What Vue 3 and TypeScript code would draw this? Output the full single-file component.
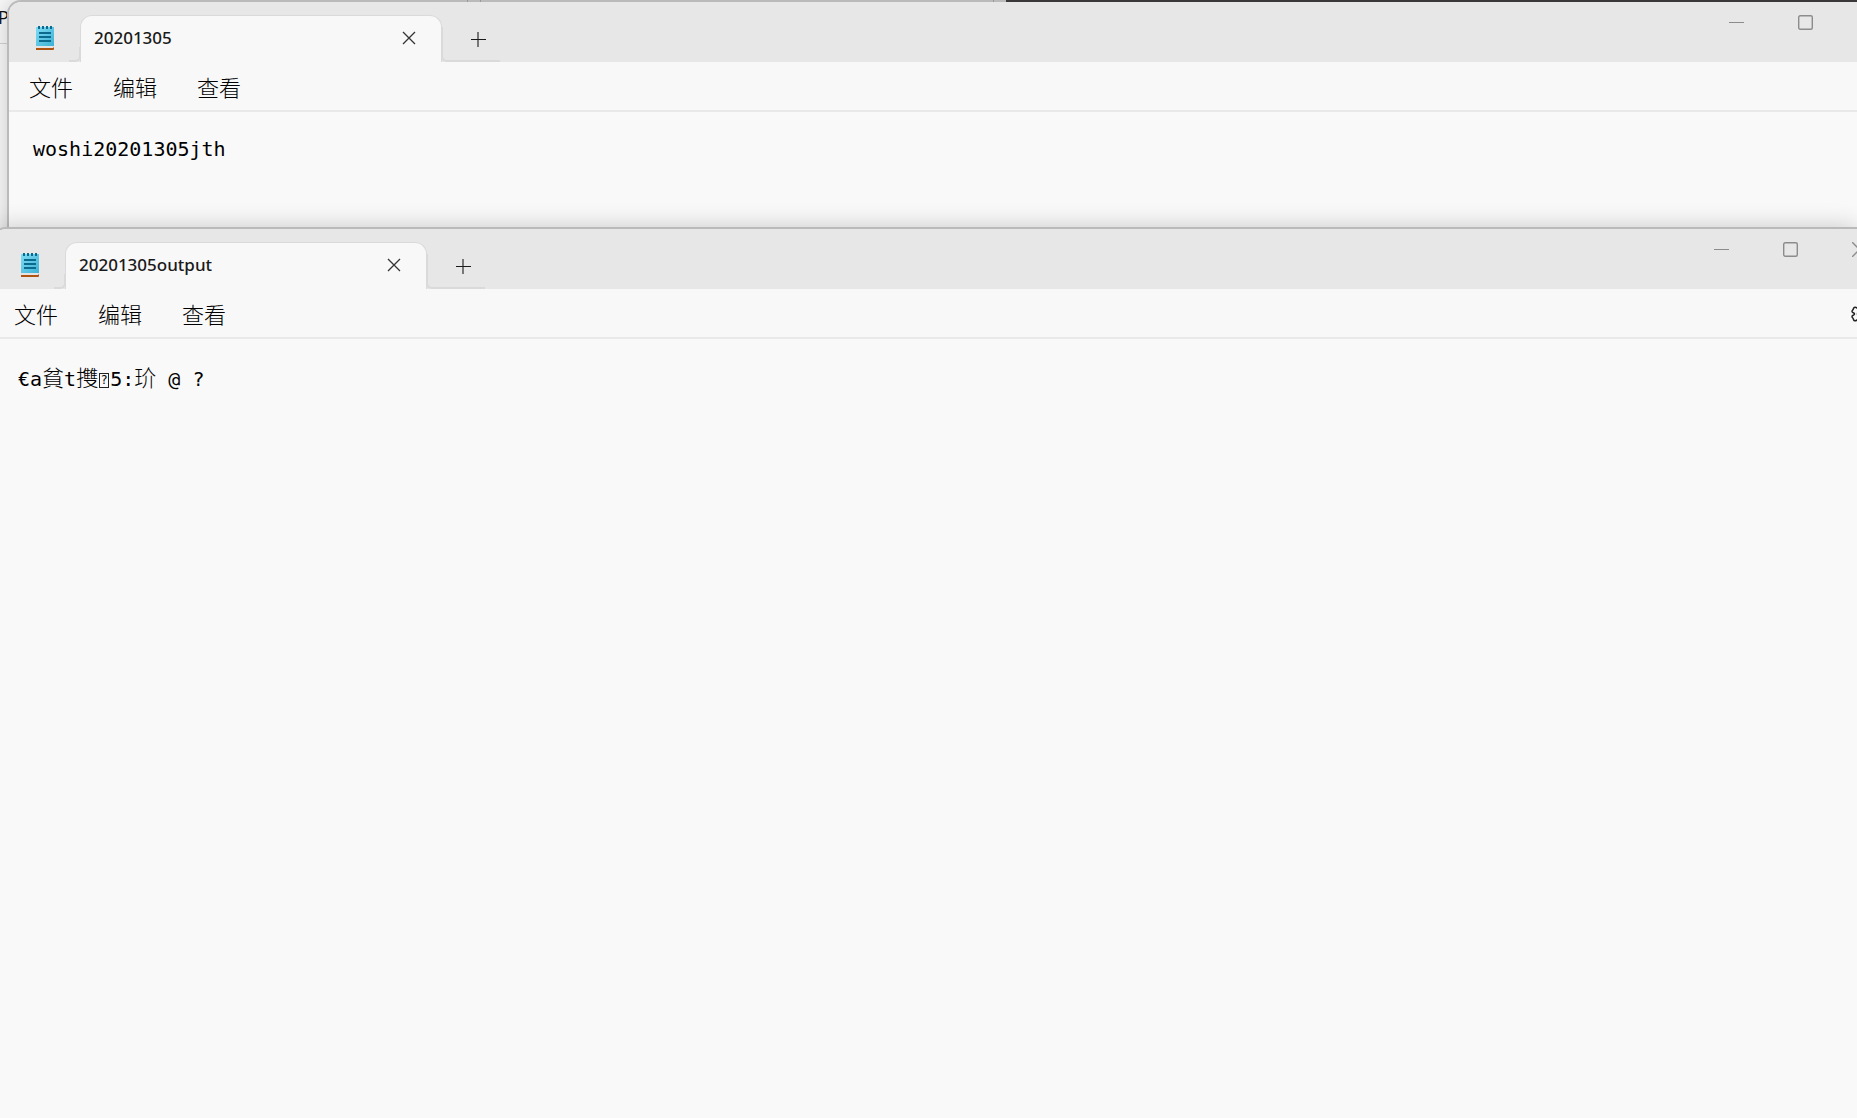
<script setup lang="ts">
import { ref } from 'vue'

interface Run { text: string; kind: 'latin' | 'cjk' | 'missing' }
interface Note { id: string; title: string; runs: Run[] }

const menus = ['文件', '编辑', '查看']
const notes = ref<Note[]>([
  { id: 'back', title: '20201305', runs: [{ text: 'woshi20201305jth', kind: 'latin' }] },
  {
    id: 'front',
    title: '20201305output',
    runs: [
      { text: '€a', kind: 'latin' },
      { text: '貧', kind: 'cjk' },
      { text: 't', kind: 'latin' },
      { text: '㩳', kind: 'cjk' },
      { text: '?', kind: 'missing' },
      { text: '5:', kind: 'latin' },
      { text: '玠', kind: 'cjk' },
      { text: ' @ ?', kind: 'latin' },
    ],
  },
])
</script>

<template>
  <main class="desktop">
    <div class="strip"><i></i><i></i><i></i><b></b></div>
    <div class="behind">P</div>
    <section v-for="note in notes" :key="note.id" class="window" :class="note.id">
      <header class="titlebar">
        <svg class="logo" width="18" height="24" viewBox="0 0 18 24" aria-hidden="true">
          <defs>
            <linearGradient :id="'page-' + note.id" x1="0" y1="0" x2="1" y2="1">
              <stop offset="0" stop-color="#7fdcf4" />
              <stop offset="1" stop-color="#3db1d4" />
            </linearGradient>
          </defs>
          <rect y="19" width="18" height="3" fill="#e4e4e4" />
          <path d="M0 22h17l1-1v2q0 1-1 1H0z" fill="#ae5410" />
          <rect y="1" width="18" height="19" :fill="`url(#page-${note.id})`" />
          <path d="M3 0v3M7 0v3M11 0v3M15 0v3" stroke="#0b6a8e" stroke-width="2" />
          <path d="M3 7h12M3 11h12M3 15h12" stroke="#0b6a8e" stroke-width="2" />
        </svg>
        <div class="foot left"></div>
        <div class="tab">
          <span class="title">{{ note.title }}</span>
          <button class="icon" type="button" aria-label="Close tab">
            <svg width="14" height="14" viewBox="0 0 14 14"><path d="M1 1l12 12M13 1L1 13" stroke="#333" stroke-width="1.3" /></svg>
          </button>
        </div>
        <div class="foot right">
          <button class="icon" type="button" aria-label="New tab">
            <svg width="15" height="15" viewBox="0 0 15 15"><path d="M7 0v15" stroke="#777" stroke-width="2" /><path d="M0 7.5h15" stroke="#1a1a1a" /></svg>
          </button>
        </div>
        <div class="controls">
          <button class="icon" type="button" aria-label="Minimize">
            <svg width="15" height="15" viewBox="0 0 15 15"><path d="M0 7.5h15" stroke="#8c8c8c" /></svg>
          </button>
          <button class="icon" type="button" aria-label="Maximize">
            <svg width="15" height="15" viewBox="0 0 15 15"><rect x=".7" y=".7" width="13.6" height="13.6" rx="1.5" fill="none" stroke="#8c8c8c" stroke-width="1.4" /></svg>
          </button>
          <button class="icon" type="button" aria-label="Close">
            <svg width="15" height="15" viewBox="0 0 15 15"><path d="M0 0l15 15M15 0L0 15" stroke="#8c8c8c" stroke-width="1.4" /></svg>
          </button>
        </div>
      </header>
      <nav class="menubar">
        <button v-for="m in menus" :key="m" class="menu" type="button">{{ m }}</button>
        <button class="icon gear" type="button" aria-label="Settings">
          <svg width="18" height="18" viewBox="0 0 18 18" fill="none" stroke="#222" stroke-width="1.5">
            <path d="M6.5 3.5C5 2 3 1.5 2.5 3.5C2 5.5 1 5 1 6.5C1 8 3.5 7.5 3.5 9S1 10 1 11.5C1 13 2 12.5 2.5 14.5C3 16.500 5 16 6.5 14.5C7.5 14 7.5 17 9 17S10.5 14 11.5 14.5C13 16 15 16.5 15.5 14.5C16 12.5 17 13 17 11.5C17 10 14.5 10.5 14.5 9S17 8 17 6.5C17 5 16 5.5 15.5 3.5C15 1.5 13 2 11.5 3.5C10.5 4 10.5 1 9 1S7.5 4 6.5 3.5z" />
            <circle cx="9" cy="9" r="2.5" />
          </svg>
        </button>
      </nav>
      <div class="page"><span v-for="(r, i) in note.runs" :key="i" :class="r.kind">{{ r.text }}</span></div>
    </section>
  </main>
</template>

<style>
html, body, #app { height: 100%; }
body { margin: 0; background: #f9f9f9; }
</style>

<style scoped>
* { box-sizing: border-box; }
.desktop {
  position: relative;
  height: 100%;
  overflow: hidden;
  display: flex;
  flex-direction: column;
  background: #f9f9f9;
  font-family: "Noto Sans", "Noto Sans CJK SC", sans-serif;
}
.strip {
  position: absolute;
  z-index: 2;
  inset: 0 0 auto 24px;
  height: 2px;
  display: flex;
  background: #bababa;
}
.strip i { width: 1px; background: #999; }
.strip i:nth-child(1) { margin-left: 443px; }
.strip i:nth-child(2) { margin-left: 12px; }
.strip i:nth-child(3) { margin-left: 512px; }
.strip b { flex: 1; margin-left: 12px; background: #3a3838; }
.behind {
  position: absolute;
  inset: 0 auto auto 0;
  width: 24px;
  height: 44px;
  padding-top: 4px;
  border-bottom: 1px solid #d4d4d4;
  font: 18px/26px "Open Sans", sans-serif;
  text-indent: -2px;
  color: #111;
}
.window {
  position: relative;
  border: 2px solid #bababa;
  border-right: 0;
  border-radius: 14px 0 0 0;
  background: #f9f9f9;
  box-shadow: 0 0 24px rgba(0, 0, 0, .2);
}
.back { height: 240px; margin-left: 7px; }
.front { flex: 1; margin: -13px 0 0 -8px; border-bottom: 0; }
.titlebar {
  height: 60px;
  display: flex;
  align-items: flex-end;
  background: #e7e7e7;
  border-radius: 12px 0 0 0;
}
.logo { margin: 0 15px 12px 27px; }
.foot { height: 15px; border: 2px solid #dadada; border-top: 0; }
.foot.left { width: 12px; border-left: 0; border-radius: 0 0 6px 0; }
.foot.right { width: 59px; height: 35px; border-right: 0; border-radius: 0 0 0 6px; }
.tab {
  width: 362px;
  height: 47px;
  padding: 0 25px 2px 13px;
  display: flex;
  align-items: center;
  justify-content: space-between;
  margin: 0 -1px;
  background: #f8f8f8;
  border: solid #dadada;
  border-width: 1px 1px 0;
  border-radius: 12px 12px 0 0;
}
.title { font-size: 17px; line-height: 24px; font-weight: 500; color: #1a1a1a; }
.icon { border: 0; padding: 0; background: none; display: flex; }
.foot.right .icon { margin: 5px 0 0 28px; }
.controls { align-self: flex-start; margin: 13px -10px 0 auto; display: flex; gap: 54px; }
.back .controls { margin-right: -25px; }
.menubar {
  height: 50px;
  padding: 0 0 0 20px;
  display: flex;
  align-items: center;
  gap: 40px;
  background: #f8f8f8;
  border-bottom: 2px solid #e9e9e9;
}
.menu {
  border: 0;
  padding: 0;
  background: none;
  color: #000;
  font: 300 22px/30px "Noto Sans CJK SC", sans-serif;
}
.gear { margin: 2px -12px 0 auto; }
.back .gear { margin-right: -27px; }
.page {
  padding: 22px 24px;
  font: 20px/30px "DejaVu Sans Mono", "Noto Sans CJK SC", monospace;
  color: #000;
  white-space: pre;
}
.cjk { font: 300 22px/30px "Noto Sans CJK SC", sans-serif; }
.missing {
  display: inline-block;
  width: 10px;
  height: 15px;
  margin: 0 1px;
  border: 1px solid #222;
  font-size: 12px;
  line-height: 13px;
  text-align: center;
  vertical-align: 2px;
}
</style>
